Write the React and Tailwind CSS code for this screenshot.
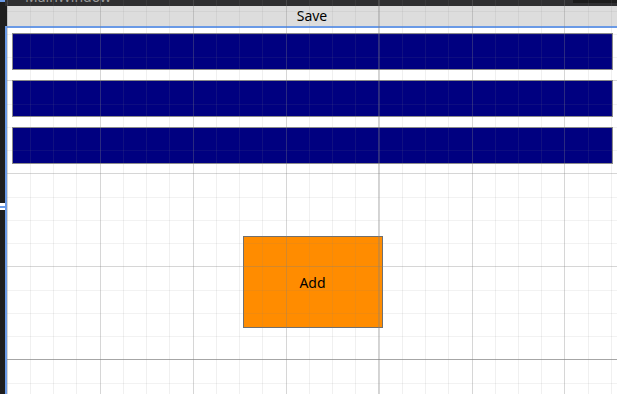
const vLines = [];
for (let i = 0; i < 27; i++) {
  const x = 6.6 + i * 23.245;
  vLines.push({ x, major: i % 4 === 0 });
}
const hLines = [];
for (let i = 0; i < 18; i++) {
  const y = 10.5 + i * 23.25;
  hLines.push({ y, major: (i - 3) % 4 === 0 });
}

const GridOverlay = () => (
  <svg
    className="absolute inset-0 pointer-events-none"
    width="617"
    height="394"
    viewBox="0 0 617 394"
  >
    {vLines.map((l, i) => (
      <rect
        key={"v" + i}
        x={Math.round(l.x)}
        y="0"
        width="1"
        height="394"
        fill="rgb(128,128,128)"
        fillOpacity={l.major ? 0.32 : 0.12}
      />
    ))}
    {hLines.map((l, i) => (
      <rect
        key={"h" + i}
        x="7"
        y={Math.round(l.y)}
        width="610"
        height="1"
        fill="rgb(128,128,128)"
        fillOpacity={l.major ? 0.32 : 0.1}
      />
    ))}
    {/* grid definition lines */}
    <rect x="378" y="0" width="1" height="394" fill="rgb(128,128,128)" fillOpacity="0.35" />
    <rect x="7" y="359" width="610" height="1" fill="rgb(128,128,128)" fillOpacity="0.55" />
  </svg>
);

export default function App() {
  return (
    <div className="relative w-[617px] h-[394px] overflow-hidden bg-[#1e1e1e] flex font-['Noto_Sans',sans-serif]">
      <div className="w-[5px] flex flex-col">
        <div className="h-[2px] bg-[#6a9ae6]" />
        <div className="mt-[201px] h-[7px] bg-white flex flex-col justify-center">
          <div className="h-[2px] bg-[#6a9ae6]" />
        </div>
      </div>
      <div className="flex-1 flex flex-col">
        <div className="h-[6px] bg-[#2f2f31] overflow-hidden flex justify-between">
          <span className="pl-[20px] -mt-[10px] text-[14px] leading-[14px] text-[#9a9a9a]">
            MainWindow
          </span>
          <div className="w-[44px] h-[3px] bg-[#1c1c1c]" />
        </div>
        <div className="flex h-[20px]">
          <div className="w-[2px] bg-[#1e1e1e]" />
          <div className="flex-1 bg-[#dddddd] flex items-center justify-center text-[14px] text-black leading-none">
            Save
          </div>
        </div>
        <div className="flex-1 bg-white border-l-2 border-t-2 border-[#6a9ae6] pt-[5px] pl-[5px] pr-[4px] flex flex-col">
          <div className="flex flex-col gap-[10px]">
            <div className="h-[37px] bg-[#000080] border border-[#8c8c8c]" />
            <div className="h-[37px] bg-[#000080] border border-[#8c8c8c]" />
            <div className="h-[37px] bg-[#000080] border border-[#8c8c8c]" />
          </div>
          <div className="mt-[72px] self-center w-[140px] h-[92px] bg-[#ff8c00] border border-[#707070] flex items-center justify-center text-[14px] text-black">
            Add
          </div>
        </div>
      </div>
      <GridOverlay />
    </div>
  );
}
